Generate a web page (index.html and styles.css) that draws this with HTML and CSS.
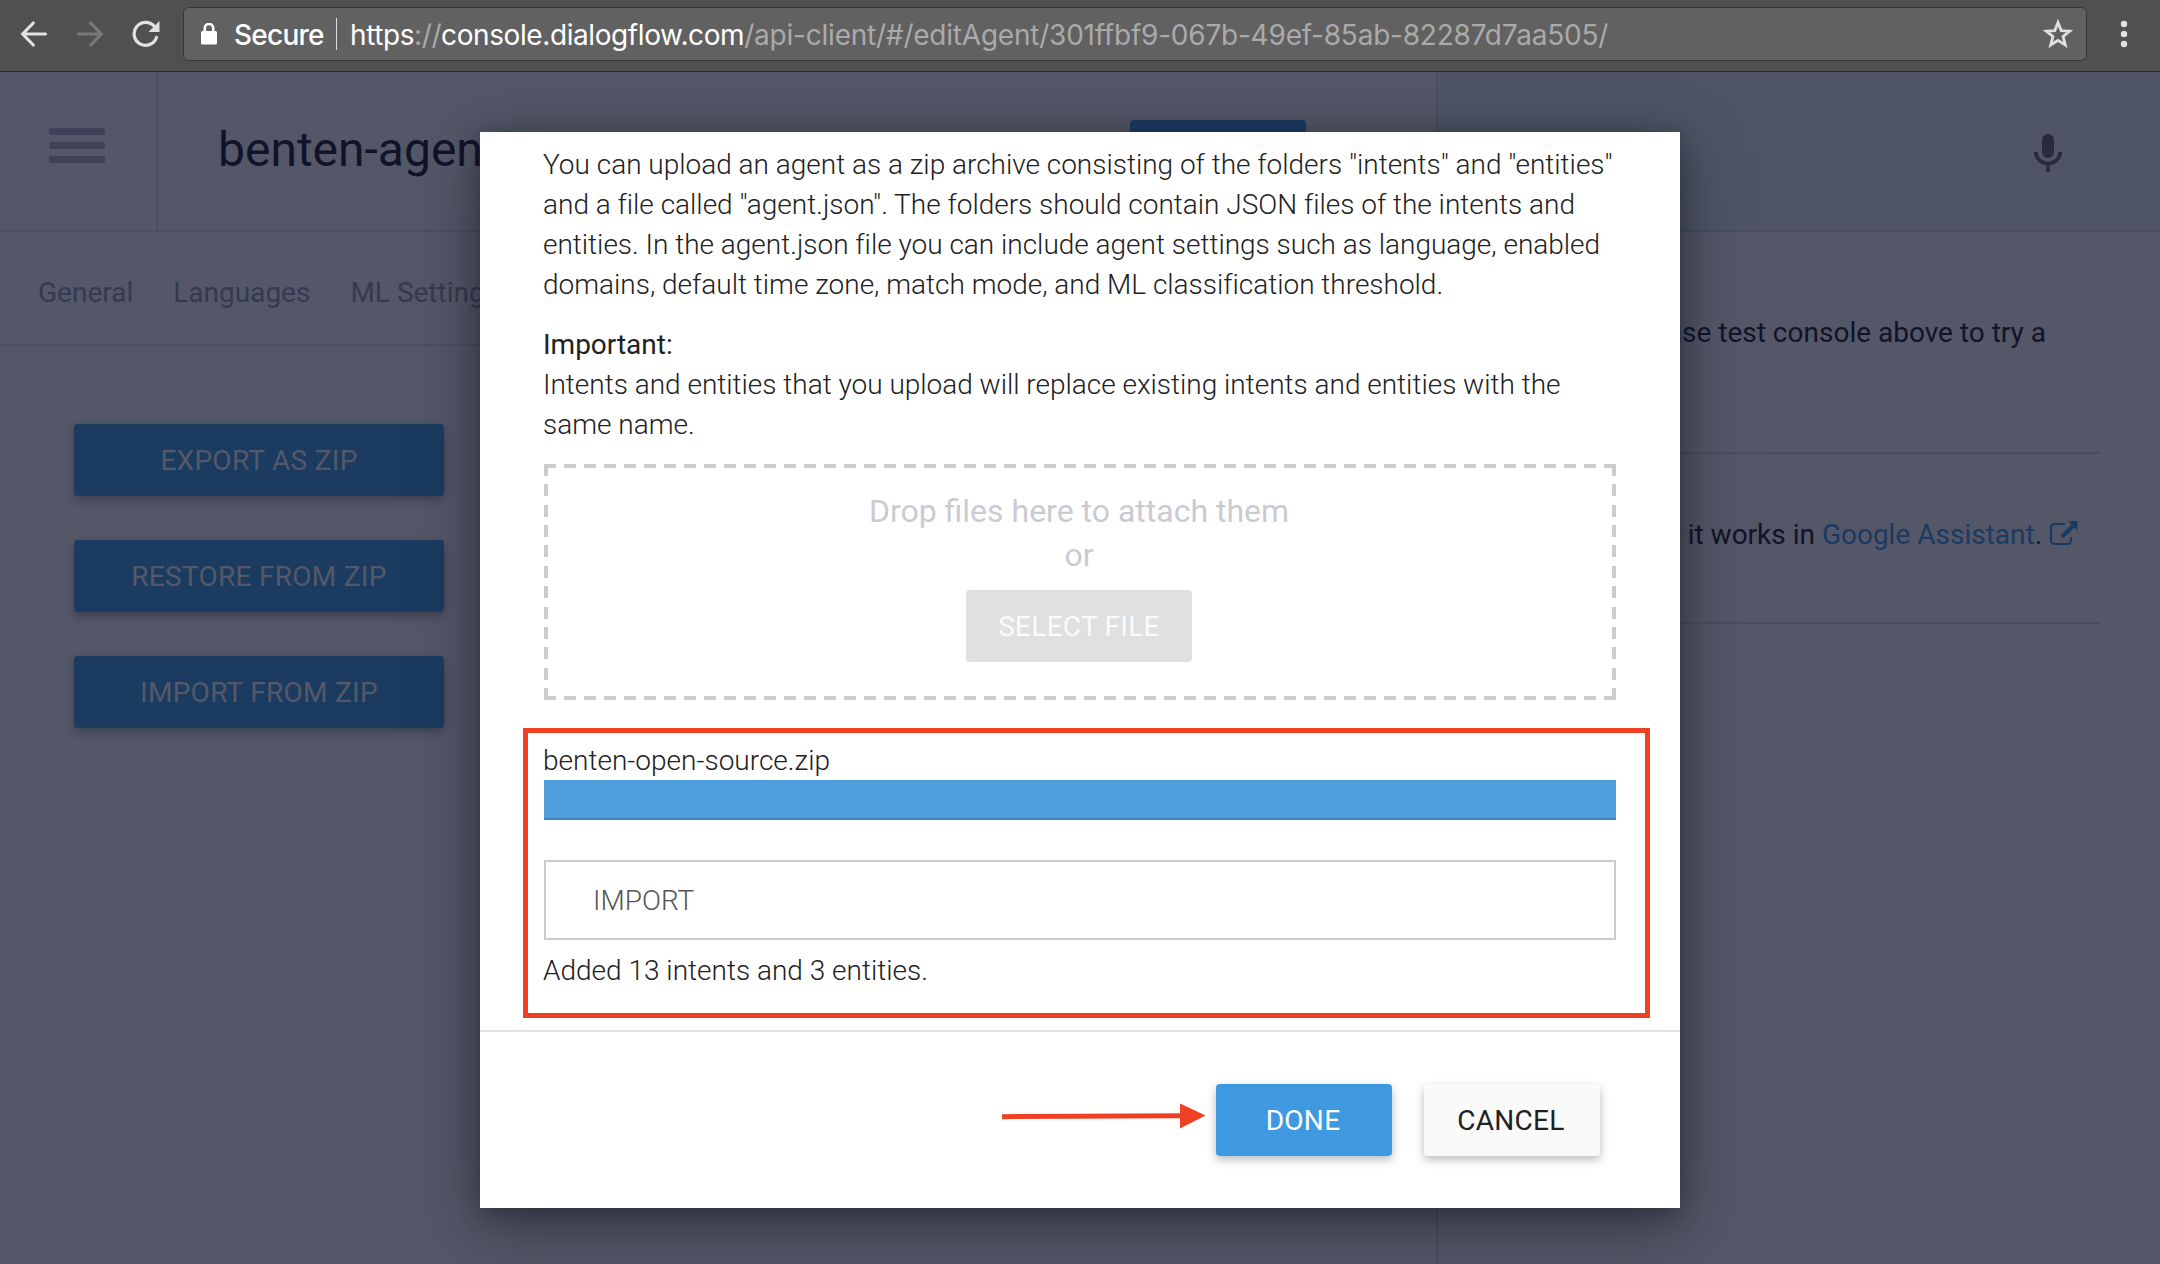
FILE: index.html
```html
<!DOCTYPE html>
<html lang="en">
<head>
<meta charset="utf-8">
<title>benten-agent</title>
<link rel="stylesheet" href="styles.css">
</head>
<body>
<header class="toolbar">
  <svg class="nav-icon back" viewBox="0 0 28 28"><path d="M13.300 3 2.700 14 13.300 25M2.700 14H25.500"/></svg>
  <svg class="nav-icon forward" viewBox="0 0 28 28"><path d="M14.700 3 25.300 14 14.700 25M25.300 14H2.500"/></svg>
  <svg class="nav-icon reload" viewBox="0 0 28 28"><path d="M24.500 17.500A11.500 11.500 0 1 1 22.500 6.500"/><path class="solid" d="M27.500 1V12H16.500Z"/></svg>
  <div class="omnibox">
    <svg class="lock" viewBox="0 0 16 22"><path class="solid" d="M1.500 8H14.500Q16 8 16 9.500V20Q16 21.500 14.500 21.500H1.500Q0 21.500 0 20V9.500Q0 8 1.500 8Z"/><path d="M3.800 9V5a4.200 4 0 0 1 8.400 0V9"/></svg>
    <span class="secure">Secure</span>
    <span class="divider"></span>
    <span class="url"><span class="host"><b>https</b>://<b>console.dialogflow.com</b></span>/api-client/#/editAgent/301ffbf9-067b-49ef-85ab-82287d7aa505/</span>
    <svg class="star" viewBox="0 0 30 29"><path d="M15 3.500 18.200 11.600 26.700 12.100 20.100 17.500 22.300 26 15 21.300 7.700 26 9.900 17.500 3.300 12.100 11.800 11.600Z"/></svg>
  </div>
  <svg class="dots" viewBox="0 0 8 28"><circle cx="4" cy="4" r="3.200"/><circle cx="4" cy="14" r="3.200"/><circle cx="4" cy="24" r="3.200"/></svg>
</header>
<main class="page">
  <section class="agent">
    <div class="agent-head">
      <div class="menu"><i></i><i></i><i></i></div>
      <h1>benten-agent</h1>
      <span class="save"></span>
    </div>
    <nav class="tabs"><span>General</span><span>Languages</span><span>ML Settings</span></nav>
    <div class="actions">
      <button>EXPORT AS ZIP</button>
      <button>RESTORE FROM ZIP</button>
      <button>IMPORT FROM ZIP</button>
    </div>
  </section>
  <aside class="console">
    <div class="console-head">
      <svg class="mic" viewBox="0 0 28 38"><rect x="8" y="0" width="12" height="24" rx="6"/><path d="M1.800 18a12.200 11.500 0 0 0 24.400 0M14 29V38"/></svg>
    </div>
    <p class="hint">Please use test console above to try a</p>
    <p class="assistant">See how it works in <a>Google Assistant</a>. <svg class="ext" viewBox="0 0 29 25"><path d="M16 3H6Q2 3 2 7V19Q2 23 6 23H18Q22 23 22 19V16"/><path class="wide" d="M13 16 24 5"/><path class="solid" d="M19 0H28.500V10Z"/></svg></p>
  </aside>
</main>
<div class="modal">
  <div class="modal-body">
    <p>You can upload an agent as a zip archive consisting of the folders "intents" and "entities"<br>and a file called "agent.json". The folders should contain JSON files of the intents and<br>entities. In the agent.json file you can include agent settings such as language, enabled<br>domains, default time zone, match mode, and ML classification threshold.</p>
    <p class="important"><strong>Important:</strong><br>Intents and entities that you upload will replace existing intents and entities with the<br>same name.</p>
    <div class="drop"><span>Drop files here to attach them</span><span>or</span><button>SELECT FILE</button></div>
    <div class="result">
      <div class="file">benten-open-source.zip</div>
      <div class="progress"></div>
      <div class="field">IMPORT</div>
      <div class="added">Added 13 intents and 3 entities.</div>
    </div>
  </div>
  <footer class="modal-foot">
    <svg class="arrow" viewBox="0 0 206 26"><path d="M0 13.700 182 12.700"/><path class="solid" d="M178 0.500 203.500 12.500 178 25.500Z"/></svg>
    <button class="done">DONE</button>
    <button class="cancel">CANCEL</button>
  </footer>
</div>
</body>
</html>
```
FILE: styles.css
```css
* { box-sizing: border-box; }
body { margin: 0; width: 2160px; height: 1264px; overflow: hidden; background: #545767; color: #111428; font: 400 28px/40px Roboto, sans-serif; }
p, h1 { margin: 0; }
button { display: block; border: 0; padding: 2px 0 0; font: inherit; letter-spacing: .28px; text-align: center; }
svg { fill: none; flex: none; }

.toolbar { height: 72px; display: flex; align-items: center; padding: 0 0 4px 20px; background: #505050; border-bottom: 1px solid #2b2b2b; }
.nav-icon { width: 28px; height: 28px; margin-right: 28px; stroke: #e1e1e1; stroke-width: 3.200; stroke-linecap: round; }
.forward { stroke: #787878; }
.toolbar .solid { fill: #e1e1e1; stroke: none; }
.reload { margin-right: 23px; }
.omnibox { width: 1904px; height: 54px; display: flex; align-items: center; padding-left: 17px; border: 1px solid #383838; border-radius: 6px; background: #616161; white-space: nowrap; font-family: Inter, sans-serif; font-size: 28px; }
.lock { width: 16px; height: 22px; stroke: #fff; stroke-width: 2.600; }
.toolbar .lock .solid { fill: #fff; }
.secure { width: 91px; margin-left: 17px; padding-top: 2px; color: #fff; font-weight: 500; letter-spacing: -.75px; }
.divider { width: 1px; height: 32px; margin: 0 13px 0 11px; background: #ddd; }
.url { flex: 1; padding-top: 2px; color: #aaa; letter-spacing: -.22px; }
.host { letter-spacing: -.41px; }
.url b { color: #fff; font-weight: 400; }
.star { width: 30px; height: 29px; margin-right: 13px; stroke: #e1e1e1; stroke-width: 2.800; }
.dots { width: 8px; height: 28px; margin-left: 33px; fill: #e1e1e1; }

.page { height: 1192px; display: flex; }
.agent { width: 1438px; border-right: 2px solid #4c4f5f; }
.agent-head { height: 160px; display: flex; border-bottom: 2px solid #4c4f5f; }
.menu { width: 158px; padding: 56px 0 0 49px; border-right: 2px solid #4c4f5f; }
.menu i { display: block; width: 56px; height: 7px; margin-bottom: 7px; border-radius: 2px; background: #3e4256; }
h1 { width: 972px; padding: 50px 0 0 60px; font-size: 48px; line-height: 56px; font-weight: 400; }
.save { width: 176px; height: 72px; margin-top: 48px; border-radius: 4px; background: #1b3c60; }
.tabs { height: 114px; display: flex; gap: 40px; padding: 41px 0 0 38px; border-bottom: 2px solid #4c4f5f; color: #343a50; }
.actions { display: grid; gap: 44px; padding: 78px 0 0 74px; }
.actions button { width: 370px; height: 72px; border-radius: 4px; background: #1b3c60; color: #555869; box-shadow: 0 4px 10px rgba(20,20,40,.35); }
.console { flex: 1; }
.console-head { height: 160px; padding: 62px 0 0 596px; background: #4f5565; border-bottom: 2px solid #4a4e5e; }
.mic { display: block; width: 28px; height: 38px; fill: #282b3d; stroke: #282b3d; stroke-width: 0; }
.mic path { fill: none; stroke-width: 3.600; }
.hint, .assistant { width: 662px; border-bottom: 2px solid #4a4d5d; white-space: nowrap; display: flex; justify-content: flex-end; }
.hint { height: 222px; padding: 81px 54px 0 0; }
.assistant { height: 170px; padding: 61px 22px 0 0; white-space: pre; }
.assistant a { color: #1a3a61; }
.ext { width: 29px; height: 25px; margin-top: 6px; stroke: #1a3a61; stroke-width: 2.200; }
.ext .wide { stroke-width: 4; }
.ext .solid { fill: #1a3a61; stroke: none; }

.modal { position: absolute; left: 480px; top: 132px; width: 1200px; height: 1076px; background: #fff; color: #212121; box-shadow: 0 16px 56px rgba(15,20,30,.5), 0 4px 20px rgba(15,20,30,.3); font-weight: 300; }
.modal-body { height: 900px; padding: 13px 43px 0; border-bottom: 2px solid #e4e4e4; white-space: nowrap; }
.modal-body p { padding-left: 20px; letter-spacing: -.012px; }
.modal-body .important { margin-top: 20px; }
strong { font-weight: 400; }
.drop {
  --across: repeating-linear-gradient(90deg, #ccc 0 12px, transparent 12px 20px);
  --down: repeating-linear-gradient(180deg, #ccc 0 12px, transparent 12px 20.364px);
  width: 1072px; height: 236px; margin: 19px 21px 28px; padding: 25px 6px 0 4px; display: flex; flex-direction: column; align-items: center;
  background: var(--across) top / 100% 4px, var(--across) bottom / 100% 4px, var(--down) left / 4px 100%, var(--down) right / 4px 100%;
  background-repeat: no-repeat;
  color: #cacad2; font-size: 32px; line-height: 44px; font-weight: 400;
}
.drop button { width: 226px; height: 72px; margin-top: 13px; border-radius: 4px; background: #e0e0e0; color: #fafafa; font-size: 28px; }
.result { width: 1127px; height: 290px; padding: 8px 29px 0 15px; border: 5px solid #ef4023; }
.progress { height: 40px; margin: -1px 0 0 1px; background: #509edd; border-bottom: 2px solid #4285bd; }
.field { height: 80px; margin: 40px 0 11px 1px; padding: 19px 47px; border: 2px solid #ccc; color: #555; }
.modal-foot { display: flex; padding: 52px 80px 0 0; justify-content: flex-end; font-weight: 400; }
.arrow { width: 206px; height: 26px; margin: 19px 8px 0 0; stroke: #ef4023; stroke-width: 5; }
.arrow .solid { fill: #ef4023; stroke: none; }
.modal-foot button { width: 176px; height: 72px; padding-right: 2px; border-radius: 4px; box-shadow: 0 4px 10px rgba(0,0,0,.26); }
.done { background: #3f99e0; color: #fff; margin-right: 32px; }
.cancel { background: #fafafa; color: #212121; }
```
